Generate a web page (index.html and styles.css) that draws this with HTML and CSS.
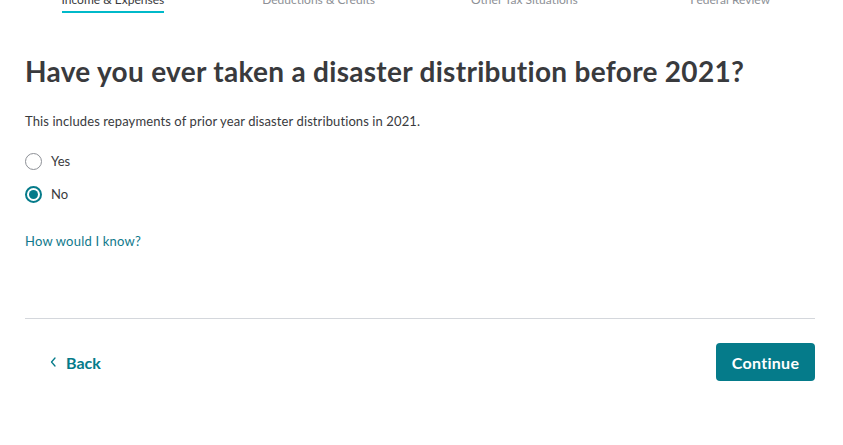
FILE: index.html
```html
<!DOCTYPE html>
<html lang="en">
<head>
<meta charset="utf-8">
<title>Disaster distribution</title>
<link rel="stylesheet" href="styles.css">
</head>
<body>
<nav class="steps">
  <div class="step active"><span>Income &amp; Expenses</span></div>
  <div class="step"><span>Deductions &amp; Credits</span></div>
  <div class="step"><span>Other Tax Situations</span></div>
  <div class="step"><span>Federal Review</span></div>
</nav>
<main class="content">
  <h1 class="title">Have you ever taken a disaster distribution before 2021?</h1>
  <p class="desc">This includes repayments of prior year disaster distributions in 2021.</p>
  <div class="options">
    <label class="option"><span class="radio"></span><span class="opt-label">Yes</span></label>
    <label class="option"><span class="radio checked"></span><span class="opt-label">No</span></label>
  </div>
  <a class="help" href="#">How would I know?</a>
  <hr class="divider">
  <div class="actions">
    <a class="back" href="#"><svg class="chev" width="7" height="10" viewBox="0 0 7 10"><path d="M5 1 L1.5 5 L5 9" fill="none" stroke="currentColor" stroke-width="1.3" stroke-linecap="round" stroke-linejoin="round"/></svg>Back</a>
    <button class="continue">Continue</button>
  </div>
</main>
</body>
</html>
```
FILE: styles.css
```css
* { box-sizing: border-box; }
html, body { margin: 0; padding: 0; background: #fff; }
body {
  font-family: Lato, "Open Sans", sans-serif;
  color: #393a3d;
  width: 843px;
  height: 445px;
  overflow: hidden;
}
.steps {
  display: grid;
  grid-template-columns: repeat(4, 1fr);
  padding: 0 10px;
  margin-top: -7px;
  height: 20px;
}
.step {
  display: flex;
  justify-content: center;
  font-size: 12px;
  color: #8d9096;
}
.step span {
  display: block;
  line-height: 13px;
  padding-bottom: 5px;
  height: 20px;
}
.step.active span {
  color: #393a3d;
  border-bottom: 2px solid #00b9c9;
}
.content {
  padding: 0 28px 0 25px;
}
.title {
  margin: 40px 0 0;
  font-size: 28px;
  font-weight: 700;
  line-height: 36px;
  color: #393a3d;
  letter-spacing: 0.3px;
}
.desc {
  margin: 24px 0 0;
  font-size: 13px;
  line-height: 16px;
  letter-spacing: 0.1px;
}
.options {
  display: flex;
  flex-direction: column;
  gap: 15px;
  margin-top: 23px;
}
.option {
  display: flex;
  align-items: center;
  gap: 9px;
  font-size: 13px;
  height: 18px;
}
.radio {
  width: 17px;
  height: 17px;
  border-radius: 50%;
  border: 1px solid #8d9096;
  display: flex;
  align-items: center;
  justify-content: center;
}
.radio.checked {
  border: 2px solid #057b8a;
}
.radio.checked::after {
  content: "";
  width: 9px;
  height: 9px;
  border-radius: 50%;
  background: #057b8a;
}
.help {
  display: block;
  margin-top: 30px;
  font-size: 13px;
  line-height: 16px;
  letter-spacing: 0.2px;
  color: #10798c;
  text-decoration: none;
}
.divider {
  margin: 69px 0 0;
  border: 0;
  border-top: 1px solid #d4d7dc;
}
.actions {
  display: flex;
  justify-content: space-between;
  align-items: center;
  margin-top: 24px;
}
.back {
  display: flex;
  align-items: center;
  gap: 9px;
  padding-left: 25px;
  font-size: 16px;
  font-weight: 700;
  color: #057b8a;
  text-decoration: none;
}
.continue {
  width: 99px;
  height: 38px;
  border: 0;
  border-radius: 4px;
  background: #057b8a;
  color: #fff;
  font-family: inherit;
  font-size: 16px;
  font-weight: 700;
  letter-spacing: 0.3px;
}
```
